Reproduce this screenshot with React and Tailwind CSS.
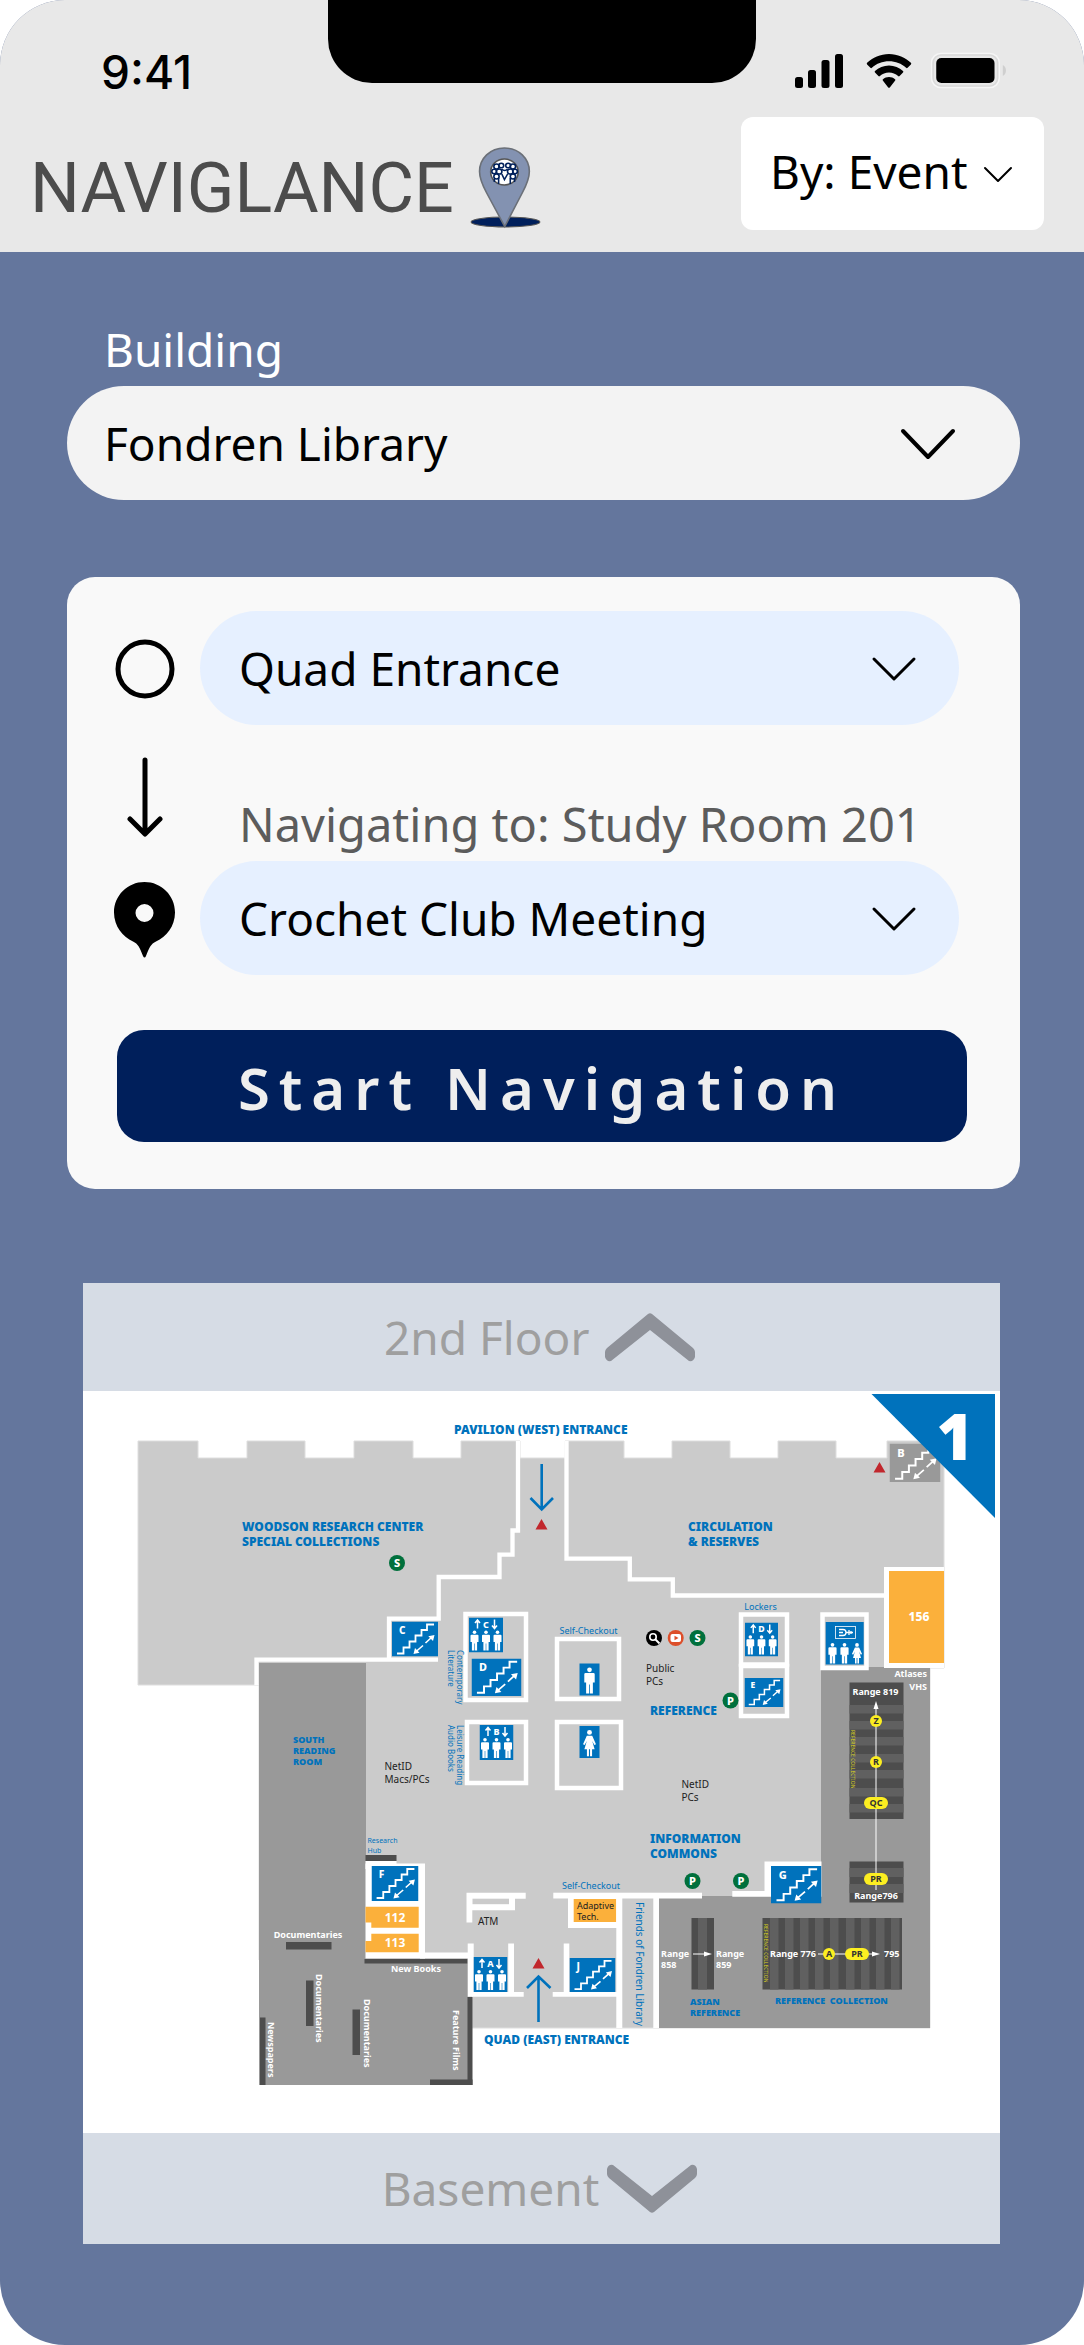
import React from "react";

const BLUE = "#0072bc";
const LIGHT = "#cbcbcb";
const MID = "#999999";
const DARK = "#4d4d4d";

function Chevron({ className, points, viewBox, stroke }) {
  return (
    <svg className={className} viewBox={viewBox} fill="none" stroke="currentColor" strokeWidth={stroke} strokeLinecap="round" strokeLinejoin="round" aria-hidden="true">
      <path d={points} />
    </svg>
  );
}

function Dropdown({ id, label, value, className, children }) {
  return (
    <div className="relative w-full">
      <select id={id} aria-label={label} defaultValue={value} className={className}>
        <option>{value}</option>
      </select>
      {children}
    </div>
  );
}

function StatusBar() {
  return (
    <div className="grid h-[117px] grid-cols-[minmax(0,328fr)_minmax(0,428fr)_minmax(0,328fr)]">
      <div className="pt-11 pl-[101px] font-[Inter] text-[46px] leading-14 font-medium">9:41</div>
      <div className="h-[83px] rounded-b-[44px] bg-black" />
      <div className="flex items-center gap-[22px] self-start pt-[52px] pl-[37px]">
        <svg width="51" height="34" viewBox="0 0 49 34" className="shrink-0" aria-hidden="true">
          <rect x="1" y="23" width="8" height="11" rx="2.500" />
          <rect x="14" y="16" width="8" height="18" rx="2.500" />
          <rect x="27.500" y="6" width="8" height="28" rx="2.500" />
          <rect x="41" y="0" width="8" height="34" rx="2.500" />
        </svg>
        <svg width="46" height="34" viewBox="0 0 45 34" className="shrink-0" aria-hidden="true">
          <path d="M22.500 0C14 0 6 3.500 .6 8.800c-.5.500-.5 1.100 0 1.600l3.300 3.400c.5.500 1 .5 1.500 0C10 9.500 16 7.200 22.500 7.200s12.500 2.300 17.100 6.600c.5.500 1 .5 1.500 0l3.300-3.400c.5-.5.500-1.100 0-1.600C39 3.500 31 0 22.500 0Z" />
          <path d="M22.500 11.500c-5.400 0-10.300 2.100-14 5.600-.5.500-.5 1 0 1.500l3.400 3.500c.5.500 1 .5 1.500 0 2.500-2.200 5.600-3.500 9.100-3.500s6.600 1.300 9.100 3.500c.5.500 1 .5 1.500 0l3.400-3.500c.5-.5.500-1 0-1.500-3.700-3.500-8.600-5.600-14-5.600Z" />
          <path d="M22.500 23c-2.300 0-4.400.9-6 2.300-.5.400-.5 1 0 1.500l5.200 6.600c.5.500 1.100.5 1.600 0l5.200-6.600c.5-.5.500-1.100 0-1.500-1.600-1.400-3.700-2.300-6-2.300Z" />
        </svg>
        <svg width="77" height="38" viewBox="0 0 74 38" preserveAspectRatio="none" className="-ml-1 shrink-0" aria-hidden="true">
          <rect x="1.500" y="1.500" width="65" height="34" rx="9" fill="none" stroke="#f6f6f6" strokeWidth="1.500" />
          <rect x="3" y="3" width="62" height="31" rx="8" fill="none" stroke="#d9d9d9" strokeWidth="1.500" />
          <rect x="6" y="6" width="56" height="25" rx="5" />
          <path d="M70 13c4 2 4 9 0 11Z" fill="#cfcfcf" />
        </svg>
      </div>
    </div>
  );
}

function Logo() {
  return (
    <div className="flex items-center pt-[30px]">
      <h1 className="font-[Roboto,sans-serif] text-[70px] leading-none text-[#4c4c4c]">NAVIGLANCE</h1>
      <svg width="71" height="82" viewBox="0 0 67 82" preserveAspectRatio="none" className="ml-4 shrink-0" aria-hidden="true">
        <ellipse cx="33.500" cy="75" rx="32.500" ry="5" fill="#001f5b" stroke="#555" />
        <path d="M32.500 1C19 1 9 11.500 9 24.500c0 8 3.500 15 6.500 21L32.800 79.500 49.500 45.500c3-6 6.500-13 6.500-21C56 11.500 46 1 32.500 1Z" fill="#8392b1" stroke="#6b7078" strokeWidth="1.500" />
        <circle cx="32.500" cy="25" r="13" fill="#fff" stroke="#555" strokeWidth="1.500" />
        <g fill="none" stroke="#00205b" strokeWidth="1.500">
          <circle cx="27.500" cy="24.500" r="2.600" />
          <circle cx="38" cy="24.500" r="2.600" />
          <circle cx="25" cy="19.500" r="2.500" />
          <circle cx="29.500" cy="18.500" r="2.300" />
          <circle cx="36" cy="18.500" r="2.300" />
          <circle cx="40.500" cy="19.500" r="2.500" />
          <circle cx="22.800" cy="24.500" r="2.200" />
          <circle cx="42.500" cy="24.500" r="2.200" />
          <circle cx="25" cy="29.500" r="2.500" />
          <circle cx="40.500" cy="29.500" r="2.500" />
          <path d="M30 22c1.500 2 4 2 5.500 0M30 27l2.500 5.500L35.500 27M27 31v6M38 31v6M23 32v3M42 32v3" />
        </g>
      </svg>
    </div>
  );
}

/* ---------- Floor plan ---------- */

function Label({ x, y, size = 12, fill = BLUE, weight = 900, lines, leading = 15, down = false, anchor = "start" }) {
  return (
    <text x={x} y={y} fontSize={size} fill={fill} fontWeight={weight} textAnchor={anchor} transform={down ? `rotate(90 ${x} ${y})` : undefined}>
      {lines.map((line, i) => (
        <tspan key={line} x={x} dy={i === 0 ? 0 : leading}>{line}</tspan>
      ))}
    </text>
  );
}

function Stairs({ x, y, w, h, letter, fill = BLUE }) {
  return (
    <svg x={x} y={y} width={w} height={h} viewBox="0 0 46 35" preserveAspectRatio="none">
      <rect width="46" height="35" fill={fill} />
      <path d="M5 32h6.500v-6h6v-6h6v-6h6V8.500h5.500V3H42" fill="none" stroke="#fff" strokeWidth="1.800" />
      <path d="M23.500 30.500l7.500-6.500M33.500 21.500l6.500-6" stroke="#fff" strokeWidth="1.600" />
      <path d="M21.500 32.500l1.500-6 4.500 4.700ZM42.500 13.500l-1.500 6-4.700-4.700Z" fill="#fff" />
      <text x="7" y="12" fontSize="10" fontWeight="800" fill="#fff">{letter}</text>
    </svg>
  );
}

function Person({ x, y, scale = 1, dress = false }) {
  return (
    <g transform={`translate(${x} ${y}) scale(${scale})`} fill="#fff">
      <circle cx="0" cy="1.800" r="1.800" />
      {dress ? (
        <path d="M-2 4.200h4l2.800 6.300-1.200.7-1.600-3 1.800 6H1.900V19.500H.4V14.200H-.4v5.300h-1.500V14.200h-1.900l1.800-6-1.600 3-1.200-.7Z" />
      ) : (
        <path d="M-3 4.200h6q1 0 1 1v6.300H2.600V20H.3v-7h-.6v7h-2.300v-8.500H-4V5.200q0-1 1-1Z" />
      )}
    </g>
  );
}

function Elevator({ x, y, w = 34, h = 35, letter }) {
  return (
    <svg x={x} y={y} width={w} height={h} viewBox="0 0 34 35">
      <rect width="34" height="35" fill={BLUE} />
      <path d="M8.500 11V3M6 5.500L8.500 2.500l2.500 3M25.500 2v8.500M23 8l2.500 3L28 8" fill="none" stroke="#fff" strokeWidth="1.500" />
      <text x="17" y="10" fontSize="9" fontWeight="800" fill="#fff" textAnchor="middle">{letter}</text>
      <Person x={5.500} y={13} />
      <Person x={17} y={13} />
      <Person x={28.500} y={13} />
    </svg>
  );
}

function Dot({ x, y, letter, fill = "#00703c" }) {
  return (
    <g>
      <circle cx={x} cy={y} r="8" fill={fill} />
      <text x={x} y={y + 4} fontSize="11" fontWeight="800" fill="#fff" textAnchor="middle">{letter}</text>
    </g>
  );
}

function Tag({ x, y, text, wide = false }) {
  return (
    <g>
      <rect x={wide ? x - 12 : x - 6} y={y - 6} width={wide ? 24 : 12} height="12" rx="6" fill="#fcee21" />
      <text x={x} y={y + 3} fontSize="9" fontWeight="700" fill="#333" textAnchor="middle">{text}</text>
    </g>
  );
}

function Room({ x, y, w, h }) {
  return <rect x={x + 2} y={y + 2} width={w - 4} height={h - 4} fill={LIGHT} stroke="#fff" strokeWidth="4.500" />;
}

function Box({ x, y, w, h, fill = "#fff" }) {
  return <rect x={x} y={y} width={w} height={h} fill={fill} />;
}

function FloorPlan() {
  const stack = "#606060";
  return (
    <svg viewBox="83 1391 917 742" className="block h-auto w-full bg-white font-['Noto_Sans',sans-serif]" role="img" aria-label="Floor 1 map">
      <path d="M138 1441H198V1458H247V1441H305V1458H354V1441H413V1458H461V1441H520V1458H565V1441H624V1458H672V1441H730V1458H778V1441H836V1458H887V1441H944V1668H930V2028H472V1960H259V1685H138Z" fill={LIGHT} stroke="#dedede" />
      <path d="M259 1663H366V1958H472V2085H259Z" fill={MID} />
      <path d="M821 1667H930V2028H659V1896H821Z" fill={MID} />

      <path d="M518 1441V1530.500H512.500V1554.700H499.500V1577H438.700V1618.700H389V1659.700M438 1659.700H256.500V1685" fill="none" stroke="#fff" strokeWidth="4.300" />
      <path d="M566.500 1441V1558.700H629.800V1579.300H672.800V1595.500H886" fill="none" stroke="#fff" strokeWidth="4.300" />

      <Box x={884} y={1567} w={60} h={101} />
      <Box x={889} y={1571} w={55} h={92} fill="#fbb03b" />
      <Room x={463.500} y={1612} w={64.500} h={90} />
      <Room x={465} y={1720} w={63} h={65} />
      <Room x={555} y={1637} w={66} h={64} />
      <Room x={555} y={1720} w={68} h={70} />
      <Room x={739} y={1612.500} w={50} h={54} />
      <Room x={739} y={1664} w={50} h={54} />
      <Room x={820.500} y={1612.500} w={48} h={57.500} />

      <Stairs x={392} y={1621.500} w={46} h={35} letter="C" />
      <Elevator x={469} y={1617.500} letter="C" />
      <Stairs x={471.500} y={1658.500} w={50} h={37.500} letter="D" />
      <Elevator x={479.500} y={1725} letter="B" />
      <Box x={579.500} y={1663.500} w={20} h={32} fill={BLUE} />
      <Person x={589.500} y={1667.500} scale={1.300} />
      <Box x={579.500} y={1726} w={20} h={32} fill={BLUE} />
      <Person x={589.500} y={1730} scale={1.350} dress />
      <Elevator x={745} y={1622.500} w={33} h={34} letter="D" />
      <Stairs x={744.500} y={1678} w={39} h={29} letter="E" />
      <Box x={825.700} y={1622} w={38} h={42.500} fill={BLUE} />
      <rect x="835.500" y="1626.500" width="20" height="12" fill="none" stroke="#fff" strokeWidth=".8" />
      <path d="M839 1629.500h4q3 0 3 3t-3 3h-4M839 1632.500h4M846 1632.500h7M849 1630v5M851 1631v3" fill="none" stroke="#fff" strokeWidth="1.300" />
      <Person x={832.500} y={1643} scale={1.020} />
      <Person x={844.500} y={1643} scale={1.020} />
      <Person x={857} y={1643} scale={1.050} dress />
      <Stairs x={889.500} y={1443.500} w={51} h={38.500} letter="B" fill={MID} />

      <Box x={365.500} y={1861} w={31} h={8} />
      <Box x={365.500} y={1863.500} w={59.500} h={95} />
      <Box x={365.500} y={1855} w={31} h={6} fill={DARK} />
      <Stairs x={371.500} y={1866} w={47} h={35} letter="F" />
      <path d="M365.500 1906.700H418.700V1927.700H371.300V1922.500H365.500ZM371.300 1933.700H418.700V1952.300H365.500V1941H371.300Z" fill="#fbb03b" />
      <Box x={420} y={1952.500} w={53} h={6} />
      <Box x={364.500} y={1959} w={103} h={4.500} fill={DARK} />

      <path d="M466.500 1892.700H525.700V1898.700H515V1910.300H472.300V1922.500H466.500Z" fill="#fff" />
      <Box x={472.500} y={1898.700} w={36.500} h={5.500} fill={LIGHT} />
      <path d="M467.700 1943.500H473.700V1992H508.200V1943.500H514V1992H523.700V1996.700H467.700Z" fill="#fff" />
      <Elevator x={473.500} y={1957} letter="A" />
      <path d="M563.700 1943.500H569.300V1992H617V1996.700H552.700V1992H563.700Z" fill="#fff" />
      <Box x={553.300} y={1892.700} w={148.700} h={5.800} />
      <Box x={568} y={1896} w={50} h={32} />
      <Box x={573.700} y={1899} w={42.500} h={23} fill="#fbb03b" />
      <Box x={616.300} y={1897} w={6} h={131} />
      <Box x={653.300} y={1897} w={5.700} h={131} />
      <Stairs x={569.500} y={1958} w={46} h={34} letter="J" />
      <path d="M732.300 1891H764.500V1861.500H821.500V1896.700H732.300Z" fill="#fff" />
      <Stairs x={771} y={1866} w={50.500} h={37.500} letter="G" />

      <Box x={286} y={1942} w={45.500} h={7.500} fill={DARK} />
      <Box x={306} y={1980.500} w={7.500} h={45.500} fill={DARK} />
      <Box x={352.500} y={2009.500} w={7.500} h={45.500} fill={DARK} />
      <Box x={260} y={2017.500} w={5.500} h={67.500} fill={DARK} />
      <Box x={467.500} y={1997} w={5} h={88} fill={DARK} />
      <Box x={430} y={2079.500} w={42.500} h={5.500} fill={DARK} />

      <Box x={849.500} y={1682.500} w={54} h={136.500} fill={DARK} />
      {[1705, 1721, 1737, 1754, 1770, 1788, 1804].map((y) => (
        <Box key={y} x={849.500} y={y} w={54} h={8.500} fill={stack} />
      ))}
      <Box x={849.500} y={1861.500} w={54} h={41} fill={DARK} />
      <Box x={849.500} y={1868} w={54} h={9} fill={stack} />
      <Box x={849.500} y={1884} w={54} h={9} fill={stack} />
      <Box x={762.500} y={1918} w={139.500} h={71.500} fill={DARK} />
      {[770, 785, 800, 815, 830, 846, 861, 876, 891].map((x) => (
        <Box key={x} x={x} y={1918} w={8.500} h={71.500} fill={stack} />
      ))}
      <Box x={691.500} y={1918} w={22.500} h={71.500} fill={DARK} />
      <Box x={698} y={1918} w={9} h={71.500} fill={stack} />

      <path d="M876 1890V1707M693 1954H707M818 1954H874" stroke="#fff" strokeWidth="1" />
      <path d="M876 1701l2.500 8h-5ZM712 1954l-8-2.500v5ZM880 1954l-8-2.500v5Z" fill="#fff" />
      <Tag x={876} y={1721} text="Z" />
      <Tag x={876} y={1762} text="R" />
      <Tag x={876} y={1803} text="QC" wide />
      <Tag x={876} y={1879} text="PR" wide />
      <Tag x={829} y={1954} text="A" />
      <Tag x={857} y={1954} text="PR" wide />

      <path d="M541.700 1464V1509M530.500 1498L541.700 1509.500L553 1498" fill="none" stroke={BLUE} strokeWidth="2.600" />
      <path d="M538.500 2022V1977M527 1988L538.500 1976.500L550.500 1988" fill="none" stroke={BLUE} strokeWidth="2.600" />
      <path d="M541.500 1519l6 10.500h-12ZM879.500 1462l6 10.500h-12ZM538.500 1958l6 10.500h-12Z" fill="#c1272d" />

      <Label x={454} y={1434} lines={["PAVILION (WEST) ENTRANCE"]} />
      <Label x={484} y={2044} lines={["QUAD (EAST) ENTRANCE"]} />
      <Label x={242} y={1531} lines={["WOODSON RESEARCH CENTER", "SPECIAL COLLECTIONS"]} />
      <Label x={688} y={1531} lines={["CIRCULATION", "& RESERVES"]} />
      <Label x={650} y={1715} lines={["REFERENCE"]} />
      <Label x={650} y={1843} lines={["INFORMATION", "COMMONS"]} />
      <Label x={293} y={1743} size={9} leading={11} lines={["SOUTH", "READING", "ROOM"]} />
      <Label x={690} y={2005} size={9} leading={11} lines={["ASIAN", "REFERENCE"]} />
      <Label x={775} y={2004} size={9} lines={["REFERENCE \u00a0COLLECTION"]} />

      <Label x={588.500} y={1634} size={9} weight={400} anchor="middle" lines={["Self-Checkout"]} />
      <Label x={591} y={1889} size={9} weight={400} anchor="middle" lines={["Self-Checkout"]} />
      <Label x={760.500} y={1610} size={9} weight={400} anchor="middle" lines={["Lockers"]} />
      <Label x={367.500} y={1843} size={7} weight={400} leading={10} lines={["Research", "Hub"]} />
      <Label x={457} y={1650} size={8} weight={400} leading={9} down lines={["Contemporary", "Literature"]} />
      <Label x={457} y={1725} size={8} weight={400} leading={9} down lines={["Leisure Reading", "Audio Books"]} />
      <Label x={636} y={1902} size={10} weight={400} down lines={["Friends of Fondren Library"]} />

      <Label x={384.500} y={1770} size={10} weight={400} fill="#222" leading={13} lines={["NetID", "Macs/PCs"]} />
      <Label x={646} y={1672} size={10} weight={400} fill="#222" leading={13} lines={["Public", "PCs"]} />
      <Label x={681.500} y={1788} size={10} weight={400} fill="#222" leading={13} lines={["NetID", "PCs"]} />
      <Label x={478} y={1925} size={10} weight={400} fill="#222" lines={["ATM"]} />
      <Label x={577} y={1909} size={9} weight={400} fill="#222" leading={11} lines={["Adaptive", "Tech."]} />

      <Label x={919} y={1621} size={12} fill="#fff" weight={800} anchor="middle" lines={["156"]} />
      <Label x={395} y={1922} size={12} fill="#fff" weight={700} anchor="middle" lines={["112"]} />
      <Label x={395} y={1947} size={12} fill="#fff" weight={700} anchor="middle" lines={["113"]} />
      <Label x={927} y={1677} size={9} fill="#fff" weight={700} anchor="end" lines={["Atlases"]} />
      <Label x={927} y={1690} size={9} fill="#fff" weight={700} anchor="end" lines={["VHS"]} />
      <Label x={875.500} y={1695} size={9} fill="#fff" weight={700} anchor="middle" lines={["Range 819"]} />
      <Label x={876} y={1899} size={9} fill="#fff" weight={700} anchor="middle" lines={["Range796"]} />
      <Label x={661} y={1957} size={9} fill="#fff" weight={700} leading={11} lines={["Range", "858"]} />
      <Label x={716} y={1957} size={9} fill="#fff" weight={700} leading={11} lines={["Range", "859"]} />
      <Label x={770} y={1957} size={9} fill="#fff" weight={700} lines={["Range 776"]} />
      <Label x={884} y={1957} size={9} fill="#fff" weight={700} lines={["795"]} />
      <Label x={308} y={1938} size={9} fill="#fff" weight={700} anchor="middle" lines={["Documentaries"]} />
      <Label x={416} y={1972} size={9} fill="#fff" weight={700} anchor="middle" lines={["New Books"]} />
      <Label x={316} y={1974} size={9} fill="#fff" weight={700} down lines={["Documentaries"]} />
      <Label x={364} y={1999} size={9} fill="#fff" weight={700} down lines={["Documentaries"]} />
      <Label x={268} y={2022} size={9} fill="#fff" weight={700} down lines={["Newspapers"]} />
      <Label x={453} y={2010} size={9} fill="#fff" weight={700} down lines={["Feature Films"]} />
      <Label x={850.500} y={1730} size={5} fill="#d9d021" weight={400} down lines={["REFERENCE COLLECTION"]} />
      <Label x={763.500} y={1924} size={5} fill="#d9d021" weight={400} down lines={["REFERENCE COLLECTION"]} />

      <Dot x={397} y={1563} letter="S" />
      <Dot x={697.500} y={1638} letter="S" />
      <Dot x={730.500} y={1700.500} letter="P" />
      <Dot x={692.500} y={1881} letter="P" />
      <Dot x={741} y={1881} letter="P" />
      <circle cx="654" cy="1638" r="8" fill="#000" />
      <circle cx="653" cy="1637" r="3.200" fill="none" stroke="#fff" strokeWidth="1.600" />
      <path d="M655.500 1639.500l4 4" stroke="#fff" strokeWidth="2" />
      <circle cx="675.700" cy="1638" r="8" fill="#dd4f2a" />
      <rect x="670.500" y="1634" width="10.500" height="8" rx="2" fill="#fff" />
      <path d="M674.500 1635.800l4 2.200-4 2.200Z" fill="#dd4f2a" />

      <path d="M871.500 1394H995V1518Z" fill={BLUE} />
      <text x="955" y="1460" fontSize="63" fontWeight="900" fill="#fff" textAnchor="middle">1</text>
    </svg>
  );
}

function FloorButton({ label, up }) {
  return (
    <button type="button" className={up ? "flex h-[108px] w-full items-center justify-center gap-2 bg-[#d6dce5] pr-1 text-[46px] text-[#9f9f9f]" : "flex h-[111px] w-full items-center justify-center gap-2 bg-[#d6dce5] pr-1 text-[46px] text-[#9f9f9f]"}>
      <span className="min-w-[213px] text-left">{label}</span>
      <svg width="90" height="49" viewBox="0 0 90 49" fill="#8e9199" className={up ? "shrink-0" : "shrink-0 rotate-180"} aria-hidden="true">
        <path d="M43 1q2-1.500 4 0L88 35q2 2 2 4v5q-1.500 5-6 4L45 17 6 48q-4.500 1-6-4v-5q0-2 2-4Z" />
      </svg>
    </button>
  );
}

const fieldClass = "h-[114px] w-full appearance-none rounded-full bg-[#e6f0ff] pl-[39px] pr-24 text-[46px] text-black";
const smallChevron = "pointer-events-none absolute top-[45px] right-[42px] h-[26px] w-[46px]";

export default function App() {
  return (
    <div className="w-full overflow-hidden rounded-[65px] bg-[#64769d] font-['Noto_Sans',sans-serif] text-black">
      <header className="bg-[#e8e8e8] pb-[22px]">
        <StatusBar />
        <div className="flex items-start justify-between pr-10 pl-[30px]">
          <Logo />
          <div className="w-[303px]">
            <Dropdown id="mode" label="Search mode" value="By: Event" className="h-[113px] w-full appearance-none rounded-xl bg-white pr-16 pb-1 pl-[29px] text-[46px] text-black">
              <Chevron className="pointer-events-none absolute top-[49px] right-[31px] h-[18px] w-[30px]" viewBox="0 0 30 18" points="M2 2l13 13L28 2" stroke="2" />
            </Dropdown>
          </div>
        </div>
      </header>

      <main className="pt-[69px] pr-16 pb-[101px] pl-[67px]">
        <label htmlFor="building" className="mb-[9px] block pl-[37px] text-[46px] leading-14 text-white">Building</label>
        <Dropdown id="building" value="Fondren Library" className="h-[114px] w-full appearance-none rounded-full bg-[#f3f3f3] pr-32 pl-[37px] text-[46px] text-black">
          <Chevron className="pointer-events-none absolute top-[42px] right-[64px] h-[32px] w-[56px]" viewBox="0 0 56 32" points="M3 3l25 26L53 3" stroke="4" />
        </Dropdown>

        <section className="mt-[77px] rounded-[28px] bg-[#f9f9f9] pt-[34px] pb-[47px]">
          <div className="grid grid-cols-[61px_1fr] gap-x-[25px] pr-[61px] pl-[47px]">
            <div className="flex items-center justify-center pt-0.5">
              <svg width="60" height="60" viewBox="0 0 60 60" aria-hidden="true">
                <circle cx="30" cy="30" r="27" fill="none" stroke="#000" strokeWidth="5" />
              </svg>
            </div>
            <Dropdown id="start" label="Starting point" value="Quad Entrance" className={fieldClass}>
              <Chevron className={smallChevron} viewBox="0 0 46 26" points="M3 3l20 20L43 3" stroke="3" />
            </Dropdown>

            <div className="flex justify-center pt-8">
              <svg width="36" height="80" viewBox="0 0 36 80" fill="none" stroke="#000" strokeWidth="5" strokeLinecap="round" strokeLinejoin="round" aria-hidden="true">
                <path d="M18 3v73M3 62l15 15 15-15" />
              </svg>
            </div>
            <label htmlFor="destination" className="pt-[71px] pb-[9px] pl-[39px] text-[47px] leading-14 text-[#5c5c5c]">Navigating to: Study Room 201</label>

            <div className="flex items-center justify-center pt-1">
              <svg width="61" height="76" viewBox="0 0 61 76" aria-hidden="true">
                <path fillRule="evenodd" d="M30.500 0C13.500 0 0 13.500 0 30.500c0 14 9 24.500 19 29 5 2.300 7 6.500 10 14.500q1.500 3 3 0c3-8 5-12.200 10-14.500 10-4.500 19-15 19-29C61 13.500 47.500 0 30.500 0ZM30.500 22a9 9 0 1 1 0 18 9 9 0 0 1 0-18Z" />
              </svg>
            </div>
            <Dropdown id="destination" value="Crochet Club Meeting" className={fieldClass}>
              <Chevron className={smallChevron} viewBox="0 0 46 26" points="M3 3l20 20L43 3" stroke="3" />
            </Dropdown>
          </div>
          <div className="mt-[55px] pr-[53px] pl-[50px]">
            <button type="button" className="h-[112px] w-full rounded-[27px] bg-[#001f5b] pt-1 text-[58px] leading-none font-semibold tracking-[9px] text-[#eeeeee]">Start Navigation</button>
          </div>
        </section>

        <section className="mt-[94px] mr-5 ml-4">
          <FloorButton label="2nd Floor" up />
          <FloorPlan />
          <FloorButton label="Basement" />
        </section>
      </main>
    </div>
  );
}
